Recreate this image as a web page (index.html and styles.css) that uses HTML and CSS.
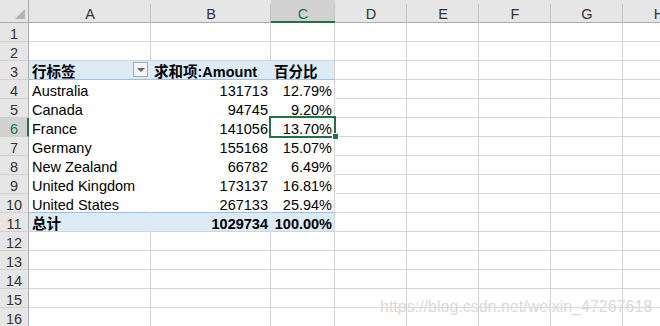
FILE: index.html
```html
<!DOCTYPE html>
<html lang="zh">
<head>
<meta charset="utf-8">
<title>Pivot</title>
<link rel="stylesheet" href="styles.css">
</head>
<body>
<div class="sheet">
  <div class="row head">
    <div class="corner"><span class="tri"></span></div>
    <div class="ch">A</div><div class="ch">B</div><div class="ch sel-h">C</div><div class="ch">D</div><div class="ch">E</div><div class="ch">F</div><div class="ch">G</div><div class="ch">H</div>
  </div>
  <div class="row"><div class="rh">1</div><div class="c"></div><div class="c"></div><div class="c"></div><div class="c"></div><div class="c"></div><div class="c"></div><div class="c"></div><div class="c"></div></div>
  <div class="row"><div class="rh">2</div><div class="c"></div><div class="c"></div><div class="c"></div><div class="c"></div><div class="c"></div><div class="c"></div><div class="c"></div><div class="c"></div></div>
  <div class="row"><div class="rh">3</div>
    <div class="c p blue btm-blue b filter-cell"><span>行标签</span><span class="fbtn"><span class="ftri"></span></span></div>
    <div class="c p blue btm-blue b">求和项:Amount</div>
    <div class="c blue btm-blue b">百分比</div>
    <div class="c"></div><div class="c"></div><div class="c"></div><div class="c"></div><div class="c"></div></div>
  <div class="row"><div class="rh">4</div><div class="c p nb">Australia</div><div class="c p nb num">131713</div><div class="c nb num">12.79%</div><div class="c"></div><div class="c"></div><div class="c"></div><div class="c"></div><div class="c"></div></div>
  <div class="row"><div class="rh">5</div><div class="c p nb">Canada</div><div class="c p nb num">94745</div><div class="c nb num">9.20%</div><div class="c"></div><div class="c"></div><div class="c"></div><div class="c"></div><div class="c"></div></div>
  <div class="row"><div class="rh sel-r">6</div><div class="c p nb">France</div><div class="c p nb num">141056</div><div class="c nb num active">13.70%<span class="selbox"></span><span class="handle"></span></div><div class="c"></div><div class="c"></div><div class="c"></div><div class="c"></div><div class="c"></div></div>
  <div class="row"><div class="rh">7</div><div class="c p nb">Germany</div><div class="c p nb num">155168</div><div class="c nb num">15.07%</div><div class="c"></div><div class="c"></div><div class="c"></div><div class="c"></div><div class="c"></div></div>
  <div class="row"><div class="rh">8</div><div class="c p nb">New Zealand</div><div class="c p nb num">66782</div><div class="c nb num">6.49%</div><div class="c"></div><div class="c"></div><div class="c"></div><div class="c"></div><div class="c"></div></div>
  <div class="row"><div class="rh">9</div><div class="c p nb">United Kingdom</div><div class="c p nb num">173137</div><div class="c nb num">16.81%</div><div class="c"></div><div class="c"></div><div class="c"></div><div class="c"></div><div class="c"></div></div>
  <div class="row"><div class="rh">10</div><div class="c p btm-blue">United States</div><div class="c p btm-blue num">267133</div><div class="c btm-blue num">25.94%</div><div class="c"></div><div class="c"></div><div class="c"></div><div class="c"></div><div class="c"></div></div>
  <div class="row"><div class="rh">11</div><div class="c p blue b">总计</div><div class="c p blue b num">1029734</div><div class="c blue b num">100.00%</div><div class="c"></div><div class="c"></div><div class="c"></div><div class="c"></div><div class="c"></div></div>
  <div class="row"><div class="rh">12</div><div class="c"></div><div class="c"></div><div class="c"></div><div class="c"></div><div class="c"></div><div class="c"></div><div class="c"></div><div class="c"></div></div>
  <div class="row"><div class="rh">13</div><div class="c"></div><div class="c"></div><div class="c"></div><div class="c"></div><div class="c"></div><div class="c"></div><div class="c"></div><div class="c"></div></div>
  <div class="row"><div class="rh">14</div><div class="c"></div><div class="c"></div><div class="c"></div><div class="c"></div><div class="c"></div><div class="c"></div><div class="c"></div><div class="c"></div></div>
  <div class="row"><div class="rh">15</div><div class="c"></div><div class="c"></div><div class="c"></div><div class="c"></div><div class="c"></div><div class="c"></div><div class="c"></div><div class="c"></div></div>
  <div class="row"><div class="rh">16</div><div class="c"></div><div class="c"></div><div class="c"></div><div class="c"></div><div class="c"></div><div class="c"></div><div class="c"></div><div class="c"></div></div>
  <div class="watermark">https://blog.csdn.net/weixin_47267618</div>
</div>
</body>
</html>
```
FILE: styles.css
```css
* { box-sizing: border-box; }
html, body {
  margin: 0;
  padding: 0;
  width: 660px;
  height: 326px;
  overflow: hidden;
  background: #fff;
}
.sheet {
  position: relative;
  width: 695px;
  font-family: "Liberation Sans", "Noto Sans CJK SC", sans-serif;
  font-size: 14.5px;
  color: #000;
}
.row {
  display: grid;
  grid-template-columns: 29px 122px 120px 64px 72px 72px 72px 72px 72px;
  height: 19px;
}
.row.head { height: 23px; }

.corner {
  background: #e6e6e6;
  border-right: 1px solid #ababab;
  border-bottom: 1px solid #ababab;
  display: flex;
  justify-content: flex-end;
  align-items: flex-end;
  padding: 0 3px 3px 0;
}
.tri {
  width: 10px;
  height: 10px;
  background: #b4b4b4;
  clip-path: polygon(100% 0, 100% 100%, 0 100%);
}
.ch {
  background: linear-gradient(#c3c3c3, #c3c3c3) right bottom / 1px 18px no-repeat, #e6e6e6;
  border-bottom: 1px solid #ababab;
  text-align: center;
  color: #333;
  line-height: 14px;
  padding-top: 7px;
}
.ch.sel-h {
  background: linear-gradient(#c3c3c3, #c3c3c3) right bottom / 1px 18px no-repeat, #d2d2d2;
  border-bottom: 2px solid #217346;
  color: #217346;
}
.rh {
  background: #e6e6e6;
  border-right: 1px solid #ababab;
  border-bottom: 1px solid #d0d0d0;
  text-align: center;
  color: #333;
  line-height: 14px;
  padding-top: 4px;
}
.rh.sel-r {
  background: #d2d2d2;
  border-right: 2px solid #217346;
  color: #217346;
  padding-left: 1px;
}
.c {
  border-right: 1px solid #d4d4d4;
  border-bottom: 1px solid #d4d4d4;
  line-height: 14px;
  padding: 4px 2px 0 3px;
  white-space: nowrap;
}
.c.p { border-right-color: transparent; }
.c.nb { border-bottom-color: transparent; }
.c.blue { background: #ddebf7; }
.c.btm-blue { border-bottom-color: #9bc2e6; }
.c.b { font-weight: bold; }
.c.num { text-align: right; padding-right: 2px; }

.filter-cell {
  display: flex;
  justify-content: space-between;
  align-items: flex-start;
  padding-right: 2px;
}
.fbtn {
  width: 15px;
  height: 15px;
  margin-top: -3px;
  border: 1px solid #a9a9a9;
  background: #f4f4f4;
  display: flex;
  align-items: center;
  justify-content: center;
}
.ftri {
  width: 0;
  height: 0;
  border-left: 4px solid transparent;
  border-right: 4px solid transparent;
  border-top: 4px solid #666;
  margin-top: 1px;
}

.active { position: relative; }
.selbox {
  position: absolute;
  inset: -2px;
  border: 2px solid #217346;
}
.handle {
  position: absolute;
  right: -5px;
  bottom: -4px;
  width: 7px;
  height: 7px;
  background: #217346;
  border: 1px solid #fff;
}

.watermark {
  position: absolute;
  left: 380px;
  top: 299px;
  font-family: "Liberation Sans", sans-serif;
  font-size: 16px;
  line-height: 16px;
  color: #d9d9d9;
  text-shadow: 0 0 1px #fff;
  white-space: nowrap;
}
```
